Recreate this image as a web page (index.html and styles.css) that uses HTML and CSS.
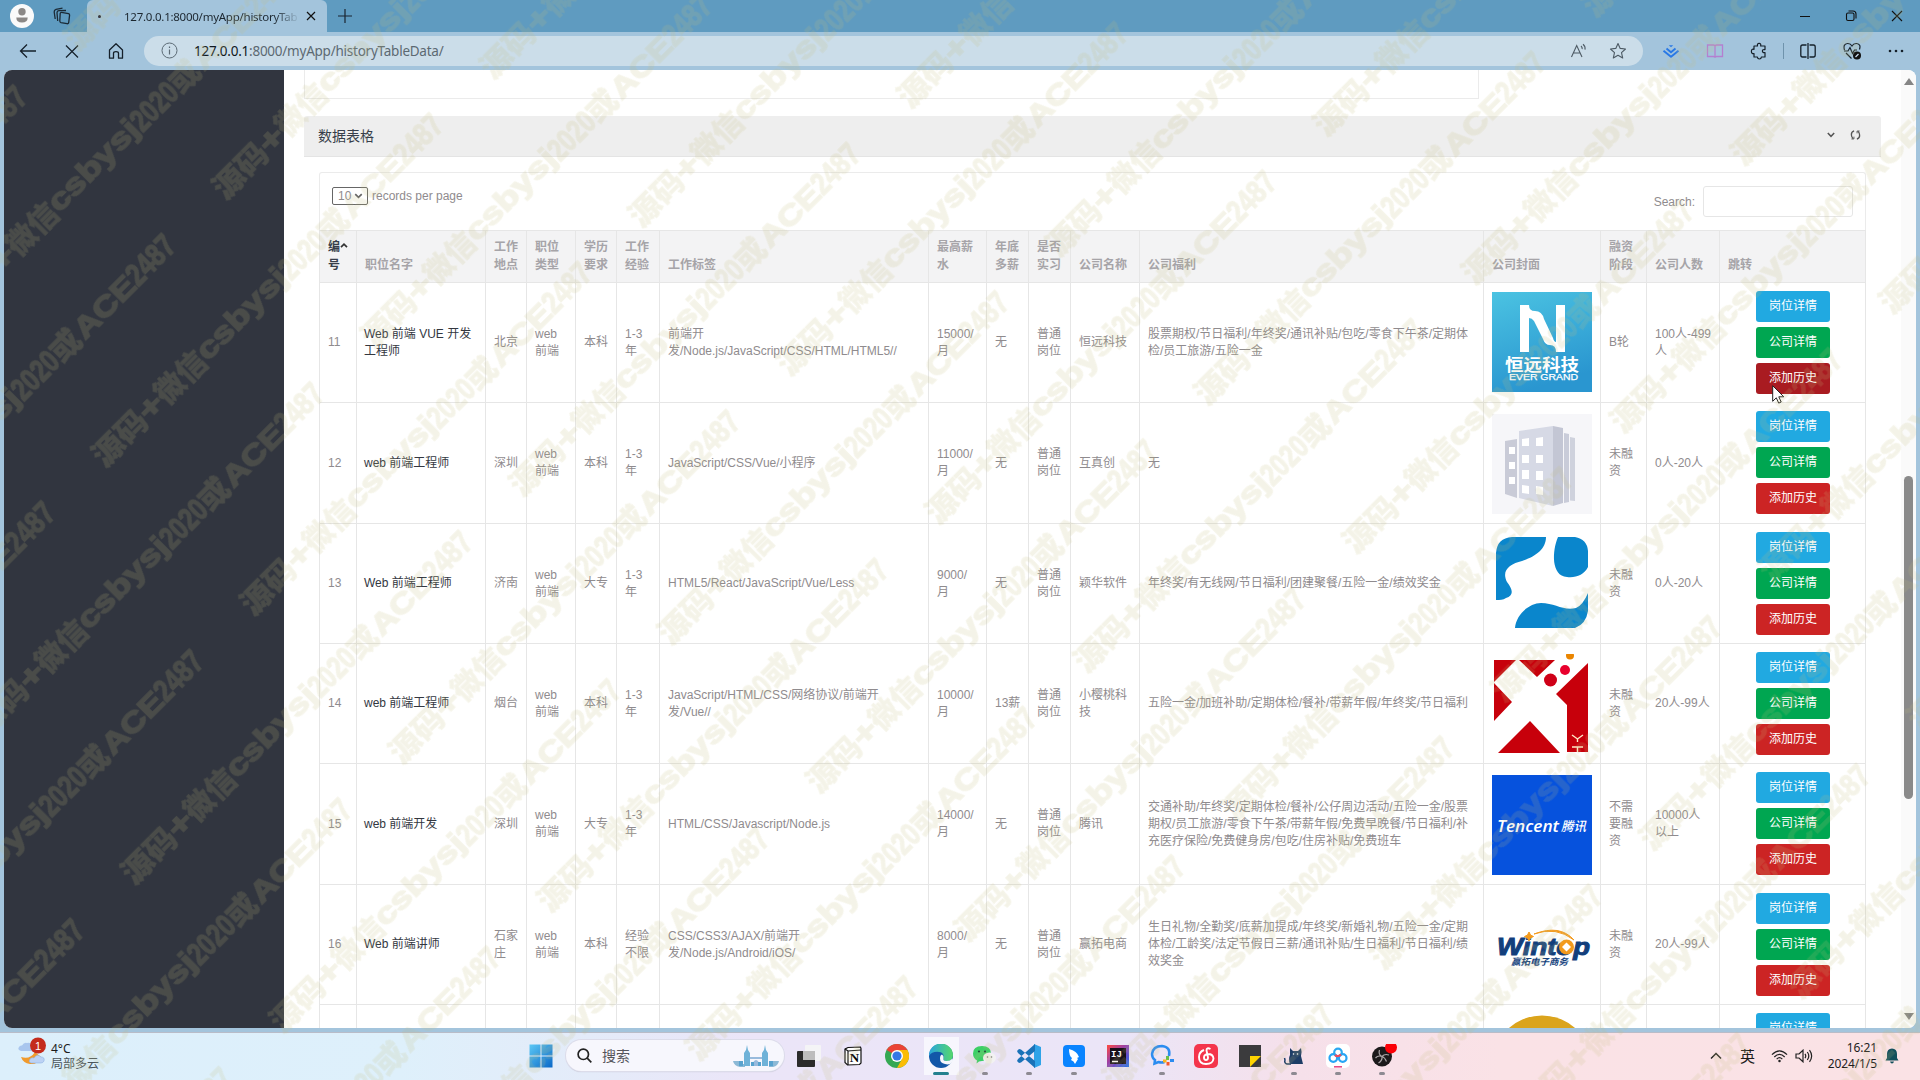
FILE: index.html
```html
<!DOCTYPE html>
<html lang="zh-CN">
<head>
<meta charset="utf-8">
<title>历史数据表格</title>
<link rel="stylesheet" href="styles.css">
</head>
<body>
<div class="screen">
  <header class="tabstrip">
    <svg class="avatar" viewBox="0 0 24 24"><circle cx="12" cy="12" r="12" fill="#fafafa"/><circle cx="12" cy="7.7" r="3.7" fill="#8b8886"/><path d="M6.3 13.6h11.4q0 5-5.7 5t-5.700-5z" fill="#8b8886"/></svg>
    <svg class="spaces" viewBox="0 0 18 18" fill="none" stroke="#1b2a36" stroke-width="1.3"><path d="M8.500 5.300 15.500 6.600Q16.700 7 16.600 8.200L15.700 15.500Q15.400 17 14 16.700L8 15.600Q6.700 15.200 6.800 13.900L7.200 6.400Q7.400 5.200 8.500 5.300z"/><path d="M4.700 14 4 5.800Q4 3.800 5.800 3.700L13 3.500"/><path d="M2.200 12 1.200 5Q1 2.900 3 2.300L9.500 1.200"/></svg>
    <div class="tab"><span class="dot"></span><span class="tab-title">127.0.0.1:8000/myApp/historyTab</span>
      <svg class="tab-x" viewBox="0 0 10 10" stroke="#111" stroke-width="1.2"><path d="M1 1l8 8M9 1l-8 8"/></svg></div>
    <svg class="newtab" viewBox="0 0 14 14" stroke="#1b2530" stroke-width="1.2"><path d="M7 0v14M0 7h14"/></svg>
    <div class="winbtns">
      <svg viewBox="0 0 12 12" fill="none" stroke="#111"><path d="M1 6.500h10"/></svg>
      <svg viewBox="0 0 12 12" fill="none" stroke="#111" stroke-width="1.1"><rect x="1.500" y="3" width="7.500" height="7.500" rx="1.500"/><path d="M3.500 1h4.500q3 0 3 3v4.500"/></svg>
      <svg viewBox="0 0 12 12" fill="none" stroke="#111" stroke-width="1.1"><path d="M1 1l10 10M11 1l-10 10"/></svg>
    </div>
  </header>
  <div class="toolbar">
    <div class="nav">
      <svg viewBox="0 0 18 18" fill="none" stroke="#15202a" stroke-width="1.3"><path d="M17 9H1.500M8 2.500 1.500 9 8 15.500"/></svg>
      <svg viewBox="0 0 18 18" fill="none" stroke="#15202a" stroke-width="1.2"><path d="M3 3.500l12 12M15 3.500l-12 12"/></svg>
      <svg viewBox="0 0 18 18" fill="none" stroke="#15202a" stroke-width="1.3"><path d="M2.500 8 9 1.800 15.500 8v8.200h-4v-5q0-1.500-2.500-1.500t-2.500 1.500v5h-4z" stroke-linejoin="round"/></svg>
    </div>
    <div class="address">
      <svg class="info" viewBox="0 0 17 17" fill="none" stroke="#5c6b76"><circle cx="8.500" cy="8.500" r="7.500"/><path d="M8.500 7.500v5M8.500 4.500v1.500" stroke-width="1.200"/></svg>
      <span class="url"><b>127.0.0.1</b>:8000/myApp/historyTableData/</span>
      <svg class="readaloud" viewBox="0 0 18 18" fill="none" stroke="#4d5a64" stroke-width="1.1"><path d="M1.500 15 6.700 3.500 12 15M3.500 11h6.500M11 4q1.500 1.200 1.200 3.200M13 2.200q2.600 2 2 5.500"/></svg>
      <svg class="star" viewBox="0 0 18 18" fill="none" stroke="#4d5a64" stroke-width="1.1"><path d="M9 1.500l2.200 4.900 5.300.6-4 3.600 1.200 5.400L9 13.300 4.300 16l1.200-5.400-4-3.600 5.300-.6z" stroke-linejoin="round"/></svg>
    </div>
    <div class="exts">
      <svg viewBox="0 0 18 18" fill="none" stroke="#2878e6" stroke-width="1.900"><path d="M1.500 8.800 9 14.800 16.500 8.800M4.500 6.500 9 10.200 13.500 6.500"/><path d="M6.800 3.300h4.400L9 5.200z" fill="#2878e6" stroke="none"/></svg>
      <svg viewBox="0 0 18 18" fill="none" stroke="#b47fd0" stroke-width="1.3"><path d="M1.500 3h6q1.500 0 1.500 1.200Q9 3 10.500 3h6v11.500h-6Q9 14.500 9 15.700q0-1.200-1.500-1.200h-6zM9 4v11"/></svg>
      <svg viewBox="0 0 18 18" fill="none" stroke="#15202a" stroke-width="1.200"><path d="M4 4h3.500q-.5-2.600 1.600-2.600T10.700 4h4.300v3.600q-2.600-.3-2.600 1.500t2.600 1.500V15h-3.600q-.2 2-2 2t-2-2H4v-3.500Q1.400 12 1.400 9.300T4 7.400z" stroke-linejoin="round"/></svg>
      <i class="sep"></i>
      <svg viewBox="0 0 18 18" fill="none" stroke="#15202a" stroke-width="1.300"><path d="M7.500 3H3.500Q1.800 3 1.800 5v8q0 2 1.700 2h4M9 1v16M10.500 3h4q1.700 0 1.700 2v8q0 2-1.700 2h-4"/></svg>
      <svg viewBox="0 0 18 18" fill="none" stroke="#15202a" stroke-width="1.200"><path d="M1.500 8Q-.3 2 4.500 1.500 7.500 1.300 9 4q1.500-2.700 4.500-2.500Q18.300 2 16.500 7.500M1 9h4l2-3.500 2.500 6L11.500 8H14M3 11l5.500 5.500"/><circle cx="14" cy="13.500" r="4" fill="#111" stroke="none"/><path d="M12.500 15l3-3" stroke="#cde"/></svg>
      <svg viewBox="0 0 18 18" fill="#15202a"><circle cx="3" cy="9" r="1.300"/><circle cx="9" cy="9" r="1.300"/><circle cx="15" cy="9" r="1.300"/></svg>
    </div>
  </div>

  <main class="viewport">
    <aside class="sidebar"></aside>
    <section class="page">
      <div class="upper-box"></div>
      <div class="panel-head">
        <span>数据表格</span>
        <svg class="caret" viewBox="0 0 8 6" fill="none" stroke="#555" stroke-width="1.500"><path d="M.8 1 4 4.300 7.200 1"/></svg>
        <svg class="reload" viewBox="0 0 12 12" fill="none" stroke="#555" stroke-width="1.400"><path d="M4.500 1.500Q1.200 2.500 1.500 6 1.700 8.600 3.500 10M7.500 10.500Q10.800 9.500 10.500 6 10.300 3.400 8.500 2"/><path d="M1.500 10.300h2.800V7.800M10.500 1.700H7.700v2.500" stroke-width="1"/></svg>
      </div>
      <div class="data">
        <div class="controls">
          <label class="len"><span class="select">10<svg viewBox="0 0 10 7" fill="none" stroke="#666" stroke-width="2"><path d="M1.200 1.300 5 5l3.800-3.700"/></svg></span>records per page</label>
          <label class="search">Search:<span class="field"></span></label>
        </div>
        <table>
          <colgroup><col class="c1"><col class="c2"><col class="c3"><col class="c4"><col class="c5"><col class="c6"><col class="c7"><col class="c8"><col class="c9"><col class="c10"><col class="c11"><col class="c12"><col class="c13"><col class="c14"><col class="c15"><col class="c16"></colgroup>
          <thead><tr><th class="sorted">编<svg viewBox="0 0 8 5" fill="none" stroke="#333" stroke-width="1.700"><path d="M1 4.200 4 1.200 7 4.200"/></svg><br>号</th><th>职位名字</th><th>工作<br>地点</th><th>职位<br>类型</th><th>学历<br>要求</th><th>工作<br>经验</th><th>工作标签</th><th>最高薪<br>水</th><th>年底<br>多薪</th><th>是否<br>实习</th><th>公司名称</th><th>公司福利</th><th>公司封面</th><th>融资<br>阶段</th><th>公司人数</th><th>跳转</th></tr></thead>
          <tbody>
          <tr><td>11</td><td class="job">Web 前端 VUE 开发<br>工程师</td><td>北京</td><td>web<br>前端</td><td>本科</td><td>1-3<br>年</td><td>前端开<br>发/Node.js/JavaScript/CSS/HTML/HTML5//</td><td>15000/<br>月</td><td>无</td><td>普通<br>岗位</td><td>恒远科技</td><td>股票期权/节日福利/年终奖/通讯补贴/包吃/零食下午茶/定期体<br>检/员工旅游/五险一金</td>
            <td class="cover"><svg class="logo" viewBox="0 0 100 100"><defs><linearGradient id="eg" x1="0" y1="0" x2=".3" y2="1"><stop offset="0" stop-color="#4bc3e2"/><stop offset="1" stop-color="#2a96d0"/></linearGradient></defs><rect width="100" height="100" fill="url(#eg)"/><path d="M28 13h9q0 6 6 6 7 0 9 8l9 19q1 4 3 4V13h9v47h-9q0-7-6-7-5 0-7-6L42 29q-2-3-5-3v34h-9z" fill="#fff"/><text x="13" y="78.500" font-size="16.500" font-weight="700" textLength="74" lengthAdjust="spacingAndGlyphs" fill="#fff">恒远科技</text><text x="17" y="87.500" font-size="8.500" textLength="69" lengthAdjust="spacingAndGlyphs" fill="#fff" stroke="#fff" stroke-width=".25">EVER GRAND</text></svg></td>
            <td>B轮</td><td>100人-499<br>人</td><td class="acts"><a class="btn blue">岗位详情</a><a class="btn green">公司详情</a><a class="btn red hover">添加历史</a></td></tr>
          <tr class="tall"><td>12</td><td class="job">web 前端工程师</td><td>深圳</td><td>web<br>前端</td><td>本科</td><td>1-3<br>年</td><td>JavaScript/CSS/Vue/小程序</td><td>11000/<br>月</td><td>无</td><td>普通<br>岗位</td><td>互真创</td><td>无</td>
            <td class="cover"><svg class="logo" viewBox="0 0 100 100"><rect width="100" height="100" fill="#f6f6f9"/><path d="M13 27l12-2v59l-12-4z" fill="#c9cbd7"/><path d="M27 17l34-5v80l-34-8z" fill="#d6d9e5"/><path d="M61 12l10 2v75l-10 3z" fill="#c3c6d4"/><path d="M72 19l5 1v68l-5 1z" fill="#c9ccd9"/><path d="M78 23l5 1v63l-5-.5z" fill="#cfd2dd"/><path d="M30 25l7-1v8h-7zM44 24l7-1v9h-7zM30 41h7v8h-7zM44 41h7v8h-7zM30 56h7v9h-7zM44 57h7v9h-7zM30 71l7 1v8l-7-1zM44 72l7 1v8l-7-1zM17 33h6v7h-6zM17 48h6v7h-6zM17 63h6v7h-6z" fill="#fff"/></svg></td>
            <td>未融<br>资</td><td>0人-20人</td><td class="acts"><a class="btn blue">岗位详情</a><a class="btn green">公司详情</a><a class="btn red">添加历史</a></td></tr>
          <tr><td>13</td><td class="job">Web 前端工程师</td><td>济南</td><td>web<br>前端</td><td>大专</td><td>1-3<br>年</td><td>HTML5/React/JavaScript/Vue/Less</td><td>9000/<br>月</td><td>无</td><td>普通<br>岗位</td><td>颖华软件</td><td>年终奖/有无线网/节日福利/团建聚餐/五险一金/绩效奖金</td>
            <td class="cover"><svg class="logo" viewBox="0 0 100 100" fill="#0a86cc"><path d="M4 19Q5 4 20 3h34c0 13-12 20-24 24-12 3-21 9-15 21 6 8 7 13-1 16-3 2-6 2-10 2z"/><path d="M66 3h17q12 2 13 14v16c-4 8-12 11-21 10C59 42 60 17 66 3z"/><path d="M23 94c1-13 14-25 26-25 14 0 22 8 35 5q7-3 12-15v18q-2 13-13 17z"/></svg></td>
            <td>未融<br>资</td><td>0人-20人</td><td class="acts"><a class="btn blue">岗位详情</a><a class="btn green">公司详情</a><a class="btn red">添加历史</a></td></tr>
          <tr><td>14</td><td class="job">web 前端工程师</td><td>烟台</td><td>web<br>前端</td><td>本科</td><td>1-3<br>年</td><td>JavaScript/HTML/CSS/网络协议/前端开<br>发/Vue//</td><td>10000/<br>月</td><td>13薪</td><td>普通<br>岗位</td><td>小樱桃科<br>技</td><td>五险一金/加班补助/定期体检/餐补/带薪年假/年终奖/节日福利</td>
            <td class="cover"><svg class="logo" viewBox="0 0 100 100"><path d="M2 6h22L2 28zM27 6h36L45 23zM2 29l18 19L2 67zM38 67l30 32H6zM96 9v89H75V51L64 40z" fill="#c7000b"/><circle cx="58.500" cy="26" r="6.500" fill="#cf0018"/><circle cx="73" cy="16" r="5" fill="#e8002d"/><circle cx="78" cy="1.500" r="4" fill="#ea8500"/><path d="M80 81l5.500 4 5.500-4M85.500 85v3M80 93h11M85.500 93v5" stroke="#ffe9c8" stroke-width="1.400" fill="none"/></svg></td>
            <td>未融<br>资</td><td>20人-99人</td><td class="acts"><a class="btn blue">岗位详情</a><a class="btn green">公司详情</a><a class="btn red">添加历史</a></td></tr>
          <tr class="tall"><td>15</td><td class="job">web 前端开发</td><td>深圳</td><td>web<br>前端</td><td>大专</td><td>1-3<br>年</td><td>HTML/CSS/Javascript/Node.js</td><td>14000/<br>月</td><td>无</td><td>普通<br>岗位</td><td>腾讯</td><td>交通补助/年终奖/定期体检/餐补/公仔周边活动/五险一金/股票<br>期权/员工旅游/零食下午茶/带薪年假/免费早晚餐/节日福利/补<br>充医疗保险/免费健身房/包吃/住房补贴/免费班车</td>
            <td class="cover"><svg class="logo" viewBox="0 0 100 100"><rect width="100" height="100" fill="#0652dd"/><g fill="#fff" font-style="italic"><text x="5" y="56.500" font-size="16" font-weight="600" font-family="Open Sans" textLength="62" lengthAdjust="spacingAndGlyphs">Tencent</text><text x="69" y="56" font-size="13" font-weight="500" textLength="25" lengthAdjust="spacingAndGlyphs">腾讯</text></g></svg></td>
            <td>不需<br>要融<br>资</td><td>10000人<br>以上</td><td class="acts"><a class="btn blue">岗位详情</a><a class="btn green">公司详情</a><a class="btn red">添加历史</a></td></tr>
          <tr><td>16</td><td class="job">Web 前端讲师</td><td>石家<br>庄</td><td>web<br>前端</td><td>本科</td><td>经验<br>不限</td><td>CSS/CSS3/AJAX/前端开<br>发/Node.js/Android/iOS/</td><td>8000/<br>月</td><td>无</td><td>普通<br>岗位</td><td>赢拓电商</td><td>生日礼物/全勤奖/底薪加提成/年终奖/新婚礼物/五险一金/定期<br>体检/工龄奖/法定节假日三薪/通讯补贴/生日福利/节日福利/绩<br>效奖金</td>
            <td class="cover"><svg class="logo" viewBox="0 0 100 100"><text x="5" y="60" font-size="24" font-weight="700" font-style="italic" textLength="93" lengthAdjust="spacingAndGlyphs" fill="#123f7c" stroke="#123f7c" stroke-width="1">Wintop</text><circle cx="74.500" cy="52" r="7.500" fill="#f39a1c"/><path d="M74.500 47.500l4.500 4.500-4.500 4.500-4.500-4.500z" fill="#fff"/><path d="M42 39q22-8 40 6-14-16-40-6zM37 37l1.500 3 3 1.500-3 1.500-1.500 3-1.500-3-3-1.500 3-1.500z" fill="#f39a1c" stroke="#f39a1c"/><text x="19" y="69.500" font-size="9" font-weight="700" font-style="italic" textLength="57" lengthAdjust="spacingAndGlyphs" fill="#123f7c">赢拓电子商务</text></svg></td>
            <td>未融<br>资</td><td>20人-99人</td><td class="acts"><a class="btn blue">岗位详情</a><a class="btn green">公司详情</a><a class="btn red">添加历史</a></td></tr>
          <tr><td></td><td></td><td></td><td></td><td></td><td></td><td></td><td></td><td></td><td></td><td></td><td></td><td class="cover"><svg class="logo" viewBox="0 0 100 100"><circle cx="50" cy="50.500" r="50" fill="#dba41c"/></svg></td><td></td><td></td><td class="acts"><a class="btn blue">岗位详情</a><a class="btn green">公司详情</a><a class="btn red">添加历史</a></td></tr>
          </tbody>
        </table>
      </div>
    </section>
    <div class="scroll"><i class="up"></i><i class="thumb"></i><i class="down"></i></div>
  </main>

  <footer class="taskbar">
    <div class="weather">
      <svg viewBox="0 0 28 30"><path d="M3 14q-4-1-2-4 1-2 3-1.500Q6 5 9 6q4-1 5 3v5z" fill="#a9c6ee"/><path d="M3 20q9 3 14-5l6 5q-3 8-11 7Q5 26 3 20z" fill="#f09a2c"/><path d="M13 26q-3-1-1-4 2-2 4-1 3-5 7-1 4 0 3 4-1 2-3 2z" fill="#bcd2f4" stroke="#8fb2e4" stroke-width=".6"/><circle cx="20" cy="8.500" r="8" fill="#c42b1c"/><text x="20" y="12.500" font-size="11" text-anchor="middle" fill="#fff">1</text></svg>
      <div class="wtext"><span>4°C</span><span class="dim">局部多云</span></div>
    </div>
    <svg class="start" viewBox="0 0 24 24"><defs><linearGradient id="wg" x2="1" y2="1"><stop offset="0" stop-color="#5cc8f5"/><stop offset="1" stop-color="#0a68c8"/></linearGradient></defs><path d="M.500.500h11v11H.500zM12.500.500h11v11h-11zM.500 12.500h11v11H.500zM12.500 12.500h11v11h-11z" fill="url(#wg)"/></svg>
    <div class="tsearch">
      <svg class="mag" viewBox="0 0 15 15" fill="none" stroke="#222" stroke-width="1.700"><circle cx="6.300" cy="6.300" r="5.200"/><path d="M10.200 10.200 14.300 14.300"/></svg>
      <span>搜索</span>
      <svg class="city" viewBox="0 0 46 24"><path d="M0 17h6v3h6v3h24v-3h4v-3h6q-1 5-6 6H7Q1 22 0 17z" fill="#8cb9d6"/><path d="M11 22V9l2-3 1-5 1 5 2 3v13zM29 22V9l2-3 1-5 1 5 2 3v13z" fill="#6fb2d8"/><path d="M17 13h12v2H17zM20 22q0-6 3-6t3 6z" fill="#9bd"/><path d="M6 22v-5h4v5zM36 22v-5h4v5zM18 22v-4h3v4zM25 22v-4h3v4z" fill="#59a3cf"/></svg>
    </div>
    <div class="apps">
      <span class="app"><svg viewBox="0 0 24 24"><rect x="8" y="1" width="16" height="16" rx="1" fill="#f4f4f6"/><rect x="0" y="7" width="18" height="16" rx="1" fill="#2b2b2b"/><rect x="6" y="7" width="12" height="9" fill="#bdbdbd"/></svg></span>
      <span class="app"><svg viewBox="0 0 24 24"><path d="M4 5l3-1.500 12.500-.5.5 1.500V19l-1.500 1.500-12 .5L4 18.500z" fill="#fff" stroke="#111" stroke-width="1.200"/><path d="M4 5l3 2 13-1M7 7v14" stroke="#111" fill="none" stroke-width="1.200"/><text x="13.500" y="18" font-family="Liberation Serif" font-size="13" font-weight="700" text-anchor="middle">N</text></svg></span>
      <span class="app"><svg viewBox="0 0 24 24"><circle cx="12" cy="12" r="12" fill="#34a853"/><path d="M12 12 1.600 6A12 12 0 0 1 22.400 6z" fill="#ea4335"/><path d="M12 6h10.400A12 12 0 0 1 12 24l5-9z" fill="#fbbc05"/><circle cx="12" cy="12" r="6" fill="#fff"/><circle cx="12" cy="12" r="4.600" fill="#3578e5"/></svg></span>
      <span class="app active"><svg viewBox="0 0 24 24"><defs><linearGradient id="ed" x2="1"><stop offset="0" stop-color="#2aa5dd"/><stop offset="1" stop-color="#55d86b"/></linearGradient></defs><circle cx="12" cy="12" r="12" fill="#1257a8"/><path d="M0 12A12 12 0 0 1 24 11q0 6-6.500 6-4-.5-3-3 1-5-4-6Q3 7 0 12z" fill="url(#ed)"/><path d="M14.500 14q-1 3 3 3 3.500 0 6-2.500l.5 2-2 3q-3 1.500-6 .5-5-1-5-5.500Q11 11 13 10.500q2 1 1.500 3.500z" fill="#f4f6fc"/></svg><i></i></span>
      <span class="app"><svg viewBox="0 0 24 24"><path d="M9 2q9 0 9 7.500T9 17l-3 .5-2.500 2 .5-3Q0 14 0 9.500 0 2 9 2z" fill="#3ccf66"/><circle cx="6" cy="7.500" r="1.100" fill="#143"/><circle cx="12" cy="7.500" r="1.100" fill="#143"/><ellipse cx="16.500" cy="14" rx="6.500" ry="5.500" fill="#f2f2f2"/><circle cx="14.500" cy="13" r=".8" fill="#777"/><circle cx="18.500" cy="13" r=".8" fill="#777"/></svg><i></i></span>
      <span class="app"><svg viewBox="0 0 24 24"><path d="M17 0l7 3v18l-7 3z" fill="#2fa3e8"/><path d="M18 0 1 15l-1 2 2 2 2-.5L18 7zM18 24 1 9 0 7l2-2 2 .5L18 17z" fill="#1a72b8"/></svg><i></i></span>
      <span class="app"><svg viewBox="0 0 24 24"><rect x="1" y="1" width="22" height="22" rx="4" fill="#0a84ff"/><path d="M7 5q8 2 10 8l-2 1 1 1-3 5q-1-3-4-4l1-2Q7 12 7 5z" fill="#fff"/></svg><i></i></span>
      <span class="app"><svg viewBox="0 0 24 24"><defs><linearGradient id="ij" x2="1" y2="1"><stop offset="0" stop-color="#ff4a3d"/><stop offset=".5" stop-color="#8a3fb8"/><stop offset="1" stop-color="#1e6ff0"/></linearGradient></defs><rect x="1" y="1" width="22" height="22" fill="url(#ij)"/><rect x="4" y="4" width="16" height="16" fill="#17101a"/><text x="5" y="13" font-size="9" font-family="Liberation Mono" font-weight="700" fill="#fff">IJ</text><path d="M6 17.500h6" stroke="#fff" stroke-width="1.500"/></svg></span>
      <span class="app"><svg viewBox="0 0 24 24" fill="none"><path d="M19 12q2-9-7-10-9 0-10 8 0 4 3 6l-.5 3.500 4-1.500q3 1 6 0" stroke="#2b8cf0" stroke-width="2.500"/><path d="M17.500 12v4" stroke="#6cc04a" stroke-width="3"/><path d="M20 16.500h4" stroke="#2b8cf0" stroke-width="3"/><path d="M18 18v3.500" stroke="#f6582c" stroke-width="3"/><path d="M13 17h3.500" stroke="#fbb41a" stroke-width="3"/></svg><i></i></span>
      <span class="app"><svg viewBox="0 0 24 24"><rect width="24" height="24" rx="5" fill="#f4354b"/><path d="M16.500 5q-4-2-4 1.500l1.500 7q0 2.500-2 2.500t-2-2.500q0-3 4-3.500 5 0 5.500 4.500Q19 20 12 20T5 13q0-5 5-7" stroke="#fff" stroke-width="1.900" fill="none"/></svg></span>
      <span class="app"><svg viewBox="0 0 24 24"><path d="M1 1h22v22H1z" fill="#3b3b3d"/><path d="M12 23V12h11z" fill="#ffd400"/></svg></span>
      <span class="app"><svg viewBox="0 0 24 24"><path d="M8 4l3 3h5l3-3q1 3 0 8l2 8H8q-2-5 0-9z" fill="#1d3d66"/><path d="M9 20H5q-3-1-2-4l-.5-2" stroke="#1d3d66" fill="none" stroke-width="1.500"/><circle cx="11.500" cy="10" r=".8" fill="#fff"/><circle cx="15.500" cy="10" r=".8" fill="#fff"/></svg><i></i></span>
      <span class="app"><svg viewBox="0 0 24 24"><rect width="24" height="24" rx="5" fill="#fff"/><g fill="none" stroke-width="2.200"><circle cx="7.300" cy="14" r="3.800" stroke="#26a5f5"/><circle cx="16.700" cy="14" r="3.800" stroke="#26a5f5"/><circle cx="12" cy="8.500" r="3.800" stroke="#2aa7f0"/><path d="M9 11q2.500 2.500 6-.5" stroke="#f24a5c"/></g><path d="M8 22.800h8" stroke="#e8407f" stroke-width="1.500"/></svg><i></i></span>
      <span class="app"><svg class="obs" viewBox="0 0 28 24"><circle cx="12" cy="12.500" r="10" fill="#1c1a1b"/><path d="M9.500 6q-1.500 4.500 2.500 6.500M19 11q-4.500-1.500-7 1.500.5 4-3.500 6.500M12 12.500Q8 11 5.500 14M12 12.500q3 1 4.500 5" stroke="#aaa5a6" stroke-width="1.200" fill="none"/><circle cx="21" cy="3.500" r="6" fill="#fb0007"/></svg><i></i></span>
    </div>
    <div class="tray">
      <svg class="t1" viewBox="0 0 12 8" fill="none" stroke="#222" stroke-width="1.400"><path d="M1 6.500 6 1.500 11 6.500"/></svg>
      <span class="ime">英</span>
      <svg class="t2" viewBox="0 0 18 14" fill="none" stroke="#222" stroke-width="1.300"><path d="M1 5.500Q9-2.500 17 5.500M3.500 8Q9 2.500 14.500 8M6 10.300q3-3 6 0"/><circle cx="9" cy="12.300" r="1.300" fill="#222" stroke="none"/></svg>
      <svg class="t3" viewBox="0 0 18 14" fill="none" stroke="#222" stroke-width="1.200"><path d="M1 5h3l4-3.800v11.600L4 9H1zM10 4.800q1.500 2.200 0 4.400M12.300 3q3 4 0 8M14.500 1.200q4.300 5.800 0 11.600"/></svg>
      <div class="clock"><span>16:21</span><span>2024/1/5</span></div>
      <svg class="t4" viewBox="0 0 14 16"><path d="M7 .5Q12 .8 12 6v4l1.500 2.500H.500L2 10V6Q2 .8 7 .5zM5 13.500h4q-.5 2-2 2t-2-2z" fill="#12505c"/></svg>
    </div>
  </footer>

  <svg class="cursor" viewBox="0 0 13 19"><path d="M.700.700v15.600l3.600-3.500 2.400 5.300 2.500-1.100-2.400-5.200h5z" fill="#fff" stroke="#222" stroke-width="1"/></svg>
  <svg class="stamp" width="1920" height="1080">
    <defs>
      <g id="wm">
        <text class="cjk" x="-16" y="11" textLength="64" lengthAdjust="spacingAndGlyphs">源码</text>
        <text class="lat" x="48" y="10" textLength="24" lengthAdjust="spacingAndGlyphs">+</text>
        <text class="cjk" x="72" y="11" textLength="60" lengthAdjust="spacingAndGlyphs">微信</text>
        <text class="lat" x="132" y="9" textLength="116" lengthAdjust="spacingAndGlyphs">csbysj</text>
        <text class="num" x="248" y="11" textLength="54" lengthAdjust="spacingAndGlyphs">2020</text>
        <text class="cjk" x="302" y="11" textLength="31" lengthAdjust="spacingAndGlyphs">或</text>
        <text class="lat" x="335" y="11" textLength="75" lengthAdjust="spacingAndGlyphs">ACE</text>
        <text class="num" x="410" y="11" textLength="56" lengthAdjust="spacingAndGlyphs">2487</text>
      </g>
      <pattern id="wp" patternUnits="userSpaceOnUse" x="-540" y="656.700" width="548.800" height="209.900" patternTransform="rotate(-45)">
        <use href="#wm" x="24.500" y="52.500"/>
        <use href="#wm" x="-249.900" y="157.400"/>
        <use href="#wm" x="298.900" y="157.400"/>
      </pattern>
    </defs>
    <rect width="1920" height="1080" fill="url(#wp)"/>
  </svg>
</div>
</body>
</html>
```
FILE: styles.css
```css
* { box-sizing: border-box; }
body { margin: 0; background: #a3c4dc; font-family: "Liberation Sans", "Noto Sans CJK SC", sans-serif; }
svg { display: block; flex: none; }
.screen { position: relative; width: 1920px; height: 1080px; overflow: hidden; display: flex; flex-direction: column; background: #a3c4dc; }

.tabstrip { height: 32px; flex: none; background: #5f9bc0; display: flex; align-items: center; padding-left: 10px; }
.avatar { width: 24px; height: 24px; }
.spaces { width: 18px; height: 18px; margin-left: 19px; }
.tab { width: 240px; height: 32px; margin-left: 16px; background: #a3c4dc; border-radius: 6px 6px 0 0; display: flex; align-items: center; font-family: "Noto Sans", sans-serif; }
.dot { width: 3px; height: 3px; border-radius: 50%; background: #223; margin-left: 11px; }
.tab-title { width: 175px; margin-left: 23px; white-space: nowrap; font-size: 11.500px; letter-spacing: -.25px; color: #1c2730; -webkit-mask-image: linear-gradient(90deg, #000 150px, transparent 176px); }
.tab-x { width: 10px; height: 10px; margin-left: 7px; }
.newtab { width: 14px; height: 14px; margin-left: 11px; }
.winbtns { margin-left: auto; margin-right: 17px; display: flex; gap: 34px; }
.winbtns svg { width: 12px; height: 12px; }

.toolbar { height: 38px; flex: none; display: flex; align-items: center; padding-bottom: 1px; }
.nav { display: flex; gap: 26px; margin-left: 19px; width: 125px; }
.nav svg { width: 18px; height: 18px; }
.address { width: 1499px; height: 30px; border-radius: 15px; background: #cbdde9; display: flex; align-items: center; padding-left: 17px; }
.info { width: 17px; height: 17px; }
.url { margin-left: 16px; font-family: "Noto Sans", sans-serif; font-size: 13.500px; color: #5c6972; letter-spacing: -.24px; }
.url b { font-weight: 400; color: #101820; }
.readaloud { width: 18px; height: 18px; margin-left: auto; }
.star { width: 18px; height: 18px; margin: 0 16px 0 21px; }
.exts { display: flex; align-items: center; flex: 1; padding-left: 19px; gap: 26px; }
.exts svg { width: 18px; height: 18px; }
.sep { width: 1px; height: 16px; background: #6f93ac; margin: 0 -11px; }

.viewport { width: 1912px; height: 958px; flex: none; margin-left: 4px; display: flex; background: #fff; border-radius: 8px; overflow: hidden; }
.sidebar { width: 280px; flex: none; background: #31353f; }
.page { flex: none; width: 1597px; padding-left: 20px; height: 958px; overflow: hidden; }
.upper-box { width: 1175px; height: 29px; border: 1px solid #ebebeb; border-top: 0; }
.panel-head { height: 41px; margin-top: 17px; background: #eee; border-bottom: 1px solid #e4e4e4; border-radius: 3px 3px 0 0; display: flex; align-items: center; padding: 0 20px 2px 14px; font-size: 14px; color: #373e4a; }
.caret { width: 8px; height: 6px; margin-left: auto; }
.reload { width: 11px; height: 12px; margin-left: 15px; }
.data { margin: 15px 0 0 15px; width: 1547px; color: #8f8b8e; font-size: 12px; }
.controls { height: 58px; border: 1px solid #ebebeb; border-bottom: 0; border-radius: 3px 3px 0 0; display: flex; justify-content: space-between; padding: 13px 12px 0; }
.len { display: flex; gap: 4px; height: 20px; align-items: center; }
.select { width: 36px; height: 18px; border: 1px solid #666; border-radius: 2px; padding: 0 4px 0 5px; display: flex; align-items: center; justify-content: space-between; }
.select svg { width: 9px; height: 6px; }
.search { display: flex; gap: 8px; align-items: center; height: 31px; }
.field { width: 150px; height: 31px; border: 1px solid #e6e6e6; border-radius: 3px; }

table { width: 1547px; table-layout: fixed; border-spacing: 0; border-right: 1px solid #e6e6e6; line-height: 17px; white-space: nowrap; }
.c1 { width: 37px; } .c2 { width: 129px; } .c3 { width: 41px; } .c4 { width: 49px; }
.c5 { width: 41px; } .c6 { width: 43px; } .c7 { width: 269px; } .c8 { width: 58px; }
.c9 { width: 42px; } .c10 { width: 42px; } .c11 { width: 69px; } .c12 { width: 344px; }
.c13 { width: 117px; } .c14 { width: 46px; } .c15 { width: 73px; } .c16 { width: 146px; }
th, td { border-left: 1px solid #e6e6e6; border-top: 1px solid #e6e6e6; padding: 0 0 0 8px; text-align: left; vertical-align: middle; height: 120px; }
.tall td { height: 121px; }
th { height: 52px; padding-bottom: 8px; vertical-align: bottom; background: #f3f3f4; color: #a6a4a8; font-weight: 600; line-height: 17.500px; }
.sorted { color: #373e4a; }
.sorted svg { display: inline-block; width: 8px; height: 5px; vertical-align: 3px; }
.job { color: #33373f; padding-left: 7px; }
.logo { width: 100px; height: 100px; overflow: hidden; font-family: "Liberation Sans", "Noto Sans CJK SC", sans-serif; }
.cover { padding-top: 1px; }
tbody tr:first-child .cover { padding: 0 0 1px 8px; }
.acts { padding: 0 0 1px 36px; }
.btn { display: block; width: 74px; height: 31px; margin: 0 0 5px; border-radius: 3px; text-align: center; line-height: 30px; color: #fff; }
.btn:last-child { margin-bottom: 0; }
.blue { background: #21a9e1; }
.green { background: #00a651; }
.red { background: #cc2424; }
.hover { background: #a91b21; }

.scroll { width: 15px; margin-left: 20px; background: #fafafa; display: flex; flex-direction: column; align-items: center; }
.up, .down { width: 0; height: 0; border: 5px solid transparent; }
.up { border-width: 0 5px 7px; border-bottom-color: #858585; margin-top: 8px; }
.down { border-width: 7px 5px 0; border-top-color: #858585; margin-top: auto; margin-bottom: 8px; }
.thumb { width: 9px; height: 323px; margin-top: 391px; border-radius: 5px; background: #8a8a8a; }

.taskbar { height: 48px; margin-top: auto; border-top: 1px solid #b9bcc8; padding-bottom: 2px; background: linear-gradient(90deg, #dceffb 0, #def0fb 400px, #e4ebf9 590px, #ebe5f8 750px, #ebe5f7 1130px, #f6e0ea 1300px, #fae2e6 1500px, #fae2e5 100%); display: flex; align-items: center; color: #1c1c1c; }
.weather { display: flex; gap: 5px; margin-left: 18px; width: 511px; align-items: flex-start; height: 38px; }
.weather svg { width: 28px; height: 30px; }
.wtext { display: flex; flex-direction: column; font-size: 12px; line-height: 15px; padding-top: 4px; font-family: "Noto Sans", "Noto Sans CJK SC", sans-serif; }
.dim { color: #4b555c; }
.start { width: 24px; height: 24px; }
.tsearch { width: 218px; height: 31px; margin-left: 13px; border-radius: 16px; background: #f7f7fd; box-shadow: 0 0 0 1px #dcdcea, 0 1px 1px #b9b9c8; display: flex; align-items: center; font-size: 14px; color: #55555b; }
.tsearch span { padding-bottom: 1px; }
.mag { width: 15px; height: 15px; margin: 0 10px 0 11px; }
.city { width: 46px; height: 24px; margin-left: auto; margin-right: 5px; }
.apps { display: flex; margin-left: 3px; }
.app { width: 44.080px; height: 40px; display: flex; flex-direction: column; align-items: center; padding-top: 8px; }
.app > svg { width: 24px; height: 24px; }
.app > .obs { width: 28px; margin-left: 3px; }
.app i { width: 6px; height: 3px; border-radius: 2px; background: #8d8a92; margin-top: 4px; }
.active { background: linear-gradient(#f7f6fd, #f7f6fd) center / 35px 38px no-repeat; }
.active i { width: 16px; background: #24808f; }
.tray { margin-left: auto; display: flex; align-items: center; margin-right: 21px; }
.t1 { width: 12px; height: 8px; margin-right: 18px; }
.ime { font-size: 15px; margin-right: 16px; }
.t2 { width: 17px; height: 14px; margin-right: 7px; }
.t3 { width: 18px; height: 14px; }
.clock { width: 64px; display: flex; flex-direction: column; text-align: right; font-size: 12px; line-height: 16px; font-family: "Noto Sans", sans-serif; letter-spacing: -.1px; margin-right: 8px; }
.t4 { width: 14px; height: 16px; }

.cursor { position: absolute; left: 1772px; top: 385px; width: 13px; height: 19px; }
.stamp { position: absolute; left: 0; top: 0; pointer-events: none; opacity: .17; }
.stamp text { fill: #c4be7d; stroke: #c4be7d; font-weight: 900; }
.stamp .cjk { font-family: "Noto Sans CJK SC", sans-serif; font-size: 30px; stroke-width: .4px; }
.stamp .lat { font-family: "Liberation Sans", sans-serif; font-size: 30px; stroke-width: 1.600px; }
.stamp .num { font-family: "Liberation Sans", sans-serif; font-size: 32px; stroke-width: 1.400px; }
```
